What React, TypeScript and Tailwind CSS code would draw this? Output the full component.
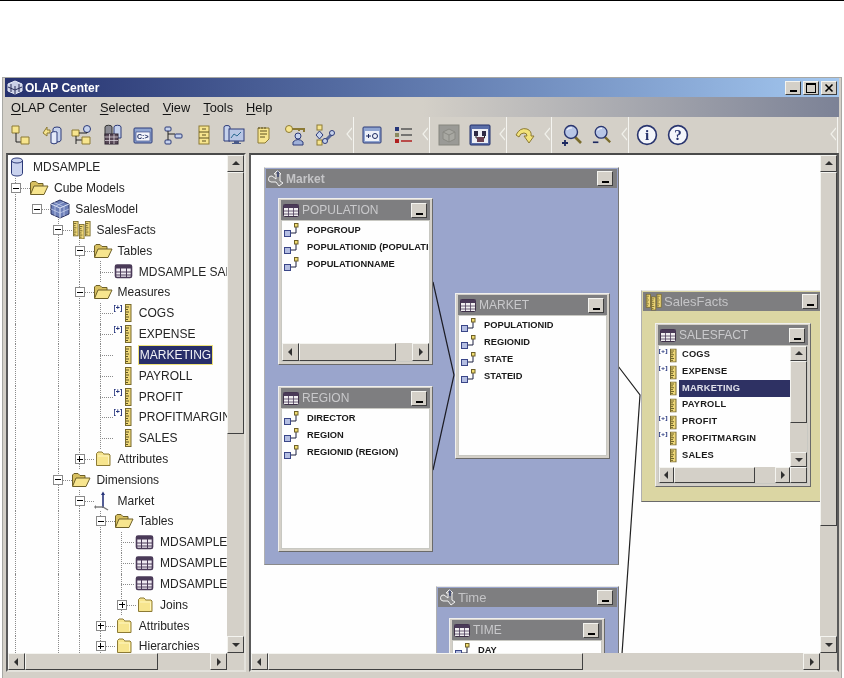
import type { ReactNode } from "react";

type Dir = "up" | "down" | "left" | "right";

const raised = "border border-t-[#f4f4f0] border-l-[#f4f4f0] border-r-[#404040] border-b-[#404040] bg-[#d4d0c8]";

function Arrow({ dir }: { dir: Dir }) {
    const pts = {
        up: "1,6 5,2 9,6",
        down: "1,3 9,3 5,7",
        left: "6,1 6,9 2,5",
        right: "3,1 3,9 7,5",
    }[dir];
    return (
        <svg width="10" height="10" viewBox="0 0 10 10">
            <polygon points={pts} fill="#303030" />
        </svg>
    );
}

function ArrowBtn({ dir, className }: { dir: Dir; className: string }) {
    return (
        <div className={`${raised} flex shrink-0 items-center justify-center ${className}`}>
            <Arrow dir={dir} />
        </div>
    );
}

function VScroll({ thumb, small }: { thumb: string; small?: boolean }) {
    const btn = small ? "h-[15px]" : "h-[17px]";
    return (
        <div className="flex h-full flex-col bg-[#d4d0c8]">
            <ArrowBtn dir="up" className={btn} />
            <div className={`${raised} shrink-0 ${thumb}`} />
            <div className="flex-1" />
            <ArrowBtn dir="down" className={btn} />
        </div>
    );
}

function HScroll({ thumb, small }: { thumb: string; small?: boolean }) {
    const btn = small ? "w-[15px]" : "w-[17px]";
    return (
        <div className="flex h-full w-full bg-[#d4d0c8]">
            <ArrowBtn dir="left" className={btn} />
            <div className={`${raised} shrink-0 ${thumb}`} />
            <div className="flex-1" />
            <ArrowBtn dir="right" className={btn} />
        </div>
    );
}

/* ---------- small tree / diagram icons ---------- */

function FolderClosed() {
    return (
        <svg width="20" height="16" viewBox="0 0 20 16">
            <path d="M3.5 4 L3.5 2.5 L5 1 H9 L10.5 2.5 V3 H16 L17 4 V14.5 H3.5 Z" fill="#f7e58e" stroke="#8c7a35" />
            <path d="M5 5 H15.5 V13" fill="none" stroke="#fff6c0" />
        </svg>
    );
}

function FolderOpen() {
    return (
        <svg width="20" height="16" viewBox="0 0 20 16">
            <path d="M1.5 14 V3 L3 1.5 H7 L9 3.5 H14 V6" fill="#d8c060" stroke="#6e6028" />
            <path d="M1.5 14.5 L5 6 H19 L15 14.5 Z" fill="#f7e58e" stroke="#6e6028" />
        </svg>
    );
}

function TableIcon() {
    return (
        <svg width="20" height="15" viewBox="0 0 20 15">
            <rect x="1.5" y="1" width="16" height="12.5" rx="1.5" fill="#efeaf2" stroke="#4a3a58" strokeWidth="1.6" />
            <rect x="1.5" y="1" width="16" height="3.5" fill="#4a3a58" />
            <path d="M2 8 H17 M2 11 H17 M6.5 4 V13 M12.5 4 V13" stroke="#4a3a58" />
        </svg>
    );
}

function Ruler() {
    return (
        <g>
            <rect x="0.5" y="0.5" width="5.5" height="17" fill="#efd878" stroke="#77692c" />
            <path d="M1 3 H4 M1 5.5 H3 M1 8 H4 M1 10.5 H3 M1 13 H4 M1 15.5 H3" stroke="#5f5524" />
        </g>
    );
}

function MeasureIcon({ plus, height = 20 }: { plus?: boolean; height?: number }) {
    return (
        <svg width="20" height={height} viewBox="0 0 20 20" preserveAspectRatio="none">
            {plus && (
                <text x="-0.5" y="6.5" fontSize="7" fontWeight="700" fill="#20307a" fontFamily="Liberation Sans">
                    [+]
                </text>
            )}
            <g transform="translate(11 1)">
                <Ruler />
            </g>
        </svg>
    );
}

function FactsIcon({ size = 20 }: { size?: number }) {
    return (
        <svg width={size} height="18" viewBox="0 0 20 18">
            <g transform="translate(2 0) scale(0.85 0.85)">
                <Ruler />
            </g>
            <g transform="translate(8 3) scale(0.85 0.85)">
                <Ruler />
            </g>
            <g transform="translate(14 0) scale(0.85 0.85)">
                <Ruler />
            </g>
        </svg>
    );
}

function CubeIcon() {
    return (
        <svg width="20" height="20" viewBox="0 0 20 20">
            <path d="M10 1 L19 5 V15 L10 19 L1 15 V5 Z" fill="#6d7fb8" stroke="#2a3260" />
            <path d="M1 5 L10 9 L19 5 M10 9 V19" stroke="#dfe6f6" fill="none" />
            <path d="M4 3.5 L13 7.5 M14 3 L6 7 M5 7 V17 M14 7 V17 M1 10 L10 14 L19 10" stroke="#cfd8f0" strokeWidth="0.7" fill="none" />
        </svg>
    );
}

function AxesIcon() {
    return (
        <svg width="20" height="20" viewBox="0 0 20 20">
            <path d="M10 17 V2" stroke="#27347a" strokeWidth="1.6" />
            <path d="M8 4 L10 0.5 L12 4 Z" fill="#27347a" />
            <path d="M10 16 H2" stroke="#777" strokeWidth="1.4" />
            <path d="M3 14 L1 16 L3 18" fill="#777" />
            <path d="M10 16 L15 19" stroke="#777" strokeWidth="1.4" />
        </svg>
    );
}

function ColumnIcon() {
    return (
        <svg width="15" height="15" viewBox="0 0 15 15" className="shrink-0">
            <rect x="0.5" y="7.5" width="6" height="6" fill="#b4bee2" stroke="#3a4688" />
            <path d="M7 10 H12 V4" fill="none" stroke="#1c2040" />
            <rect x="10.5" y="0.5" width="3.5" height="3.5" fill="#f0dc70" stroke="#6e6028" />
        </svg>
    );
}

function SmallTable() {
    return (
        <svg width="16" height="13" viewBox="0 0 16 13" className="shrink-0">
            <rect x="0.5" y="0.5" width="15" height="12" rx="1" fill="#f0eef0" stroke="#3e3048" />
            <rect x="0.5" y="0.5" width="15" height="3.5" fill="#4a3a58" />
            <path d="M1 7 H15 M1 10 H15 M5.5 4 V12 M10.5 4 V12" stroke="#4a3a58" strokeWidth="0.8" />
        </svg>
    );
}

function GroupIcon() {
    return (
        <svg width="18" height="17" viewBox="0 0 18 17" className="shrink-0">
            <path d="M10 1 L7 4 H9 V9 L5 6 A3 3 0 1 0 4 12 H9 L12 16 L16 13 L13 11 V4 H14 L11 1 Z" fill="#8b8b8c" stroke="#f2f2f2" />
            <path d="M11 1.5 V7" stroke="#20306c" strokeWidth="1.2" />
        </svg>
    );
}

function MinBtn() {
    return (
        <div className={`${raised} flex h-[15px] w-[16px] shrink-0 items-end justify-center pb-[2px]`}>
            <div className="h-[2px] w-[7px] bg-black" />
        </div>
    );
}

/* ---------- toolbar icons ---------- */

function ToolIcon({ children }: { children: ReactNode }) {
    return (
        <svg width="22" height="22" viewBox="0 0 22 22">
            {children}
        </svg>
    );
}

const yellow = "#f7e58e";
const yEdge = "#8c7a35";
const bluePale = "#c6d2ec";
const blueEdge = "#2c3a78";

const toolIcons: ReactNode[] = [
    <ToolIcon key="a">
        <path d="M2 2 H9 V9 H2 Z" fill={yellow} stroke={yEdge} />
        <path d="M6 9 V18 H11" fill="none" stroke="#222" />
        <path d="M11 13 H19 V20 H11 Z" fill={yellow} stroke={yEdge} />
    </ToolIcon>,
    <ToolIcon key="b">
        <path d="M12 5 a4 2 0 0 1 8 0 V16 a4 2 0 0 1 -8 0 Z" fill={bluePale} stroke={blueEdge} />
        <path d="M10 9 a4 2 0 0 1 6 -1 V19 a4 2 0 0 1 -6 0 Z" fill="#e4eaf8" stroke={blueEdge} />
        <path d="M2 9 L6 3 V6 H9 V9 H6 V12 Z" fill={yellow} stroke={yEdge} />
    </ToolIcon>,
    <ToolIcon key="c">
        <path d="M1 6 H8 V12 H1 Z" fill={yellow} stroke={yEdge} />
        <circle cx="16" cy="5" r="3.5" fill={bluePale} stroke={blueEdge} />
        <path d="M5 12 V20 M5 16 H11 M8 9 H16 V8" fill="none" stroke="#222" />
        <path d="M11 13 H19 V20 H11 Z" fill={yellow} stroke={yEdge} />
    </ToolIcon>,
    <ToolIcon key="d">
        <path d="M4 3 a3 1.5 0 0 1 7 0 V12 H4 Z" fill="#8a8a92" stroke="#333" />
        <path d="M13 3 a3 1.5 0 0 1 7 0 V14 H13 Z" fill={bluePale} stroke={blueEdge} />
        <rect x="4" y="10" width="13" height="10" fill="#5a4a58" stroke="#2e2432" />
        <path d="M4 13 H17 M4 16.5 H17 M8.5 10 V20 M13 10 V20" stroke="#d8d0d8" strokeWidth="0.8" />
    </ToolIcon>,
    <ToolIcon key="e">
        <rect x="2" y="4" width="18" height="15" rx="1" fill="#8fa4d0" stroke={blueEdge} />
        <rect x="4" y="8" width="14" height="9" fill="#f4f6fb" stroke={blueEdge} strokeWidth="0.6" />
        <text x="5" y="15" fontSize="7" fontWeight="700" fill="#1c2a60" fontFamily="Liberation Sans">
            C:&gt;
        </text>
    </ToolIcon>,
    <ToolIcon key="f">
        <rect x="3" y="3" width="6" height="4" rx="1" fill={bluePale} stroke={blueEdge} />
        <rect x="13" y="10" width="7" height="4" rx="1" fill={bluePale} stroke={blueEdge} />
        <rect x="3" y="16" width="6" height="4" rx="1" fill={bluePale} stroke={blueEdge} />
        <path d="M6 7 V10 H13 M6 10 V16" fill="none" stroke="#222" />
    </ToolIcon>,
    <ToolIcon key="g">
        <rect x="6" y="2" width="10" height="18" fill={yellow} stroke={yEdge} />
        <path d="M6 8 H16 M6 14 H16 M9 5 H13 M9 11 H13 M9 17 H13" stroke="#5c5020" />
    </ToolIcon>,
    <ToolIcon key="h">
        <path d="M1 3 a3 1.5 0 0 1 6 0 V17 H1 Z" fill={bluePale} stroke={blueEdge} />
        <rect x="6" y="5" width="15" height="12" fill="#b8c6e4" stroke={blueEdge} />
        <path d="M8 14 L11 10 L14 12 L18 8" fill="none" stroke="#2c6a90" />
        <path d="M11 17 H16 V19 H18 V20 H9 V19 H11 Z" fill="#4a5a88" />
    </ToolIcon>,
    <ToolIcon key="i">
        <path d="M5 4 H16 V15 L12 19 H5 Z" fill={yellow} stroke={yEdge} />
        <path d="M7 7 H14 M7 10 H14 M7 13 H12 M6 3 V5 M9 3 V5 M12 3 V5" stroke="#5c5020" />
    </ToolIcon>,
    <ToolIcon key="j">
        <circle cx="5" cy="5" r="3.5" fill={yellow} stroke={yEdge} />
        <path d="M8 5 H20 V8 M15 5 V7" fill="none" stroke={yEdge} strokeWidth="2" />
        <circle cx="14" cy="12" r="3" fill={bluePale} stroke={blueEdge} />
        <path d="M9 21 V18 Q14 13 19 18 V21 Z" fill="#9fb0d8" stroke={blueEdge} />
    </ToolIcon>,
    <ToolIcon key="k">
        <rect x="3" y="1" width="5" height="5" fill={yellow} stroke={yEdge} />
        <path d="M5.5 7 L9 11 L5.5 15 L2 11 Z" fill={bluePale} stroke={blueEdge} />
        <rect x="3" y="16" width="5" height="5" fill={yellow} stroke={yEdge} />
        <path d="M11 17 L18 10" stroke="#5a6a9a" strokeWidth="3" />
        <circle cx="18" cy="9" r="2.5" fill={bluePale} stroke={blueEdge} />
        <circle cx="11" cy="17" r="2.5" fill={bluePale} stroke={blueEdge} />
    </ToolIcon>,
];

const toolIcons2: ReactNode[] = [
    <ToolIcon key="l">
        <rect x="2" y="3" width="18" height="16" rx="1" fill="#8fa4d0" stroke={blueEdge} />
        <rect x="4" y="7" width="14" height="10" fill="#eef1f8" />
        <circle cx="14" cy="12" r="2.5" fill="none" stroke="#1c2a60" />
        <path d="M5 12 H10 M7.5 10 V14" stroke="#1c2a60" />
    </ToolIcon>,
    <ToolIcon key="m">
        <rect x="3" y="3" width="4" height="4" fill="#25357a" />
        <rect x="3" y="9" width="4" height="4" fill="#8a8a60" />
        <rect x="3" y="15" width="4" height="4" fill="#b02020" />
        <path d="M9 5 H20 M9 11 H20" stroke="#555" strokeWidth="1.5" />
        <path d="M9 17 H20" stroke="#b02020" strokeWidth="1.5" />
    </ToolIcon>,
];

const toolIcons3: ReactNode[] = [
    <ToolIcon key="n">
        <rect x="1" y="1" width="20" height="20" fill="#9a9a96" stroke="#86867f" />
        <path d="M11 5 L17 8 V15 L11 18 L5 15 V8 Z" fill="#a8a8a2" stroke="#8a8a84" />
        <path d="M5 8 L11 11 L17 8 M11 11 V18" fill="none" stroke="#8a8a84" />
    </ToolIcon>,
    <ToolIcon key="o">
        <rect x="1" y="1" width="20" height="20" rx="1" fill="#5a6ea8" stroke="#23306a" />
        <rect x="3" y="5" width="16" height="14" fill="#eef0f6" />
        <rect x="5" y="7" width="4" height="5" fill="#2e2a44" />
        <rect x="13" y="7" width="4" height="5" fill="#2e2a44" />
        <rect x="8" y="13" width="7" height="5" fill="#6a4050" />
        <path d="M7 12 V14 H8 M15 14 H15.5 V12" stroke="#222" fill="none" />
    </ToolIcon>,
];

function ZoomIcon({ plus }: { plus?: boolean }) {
    return (
        <ToolIcon>
            <path d="M14 13 L20 19" stroke="#7a6c2c" strokeWidth="2.6" />
            <circle cx="10" cy="8" r="6.5" fill="#b8c6e6" stroke="#28346e" strokeWidth="1.4" />
            <path d="M6 6 Q8 3.5 11 4" stroke="#eef2fa" fill="none" strokeWidth="1.2" />
            {plus ? <path d="M1 19 H7 M4 16 V22" stroke="#1c2860" strokeWidth="1.8" /> : <path d="M1 19 H7" stroke="#1c2860" strokeWidth="1.8" />}
        </ToolIcon>
    );
}

function CircleGlyph({ glyph }: { glyph: string }) {
    return (
        <ToolIcon>
            <circle cx="11" cy="11" r="9.4" fill="#f4f6fb" stroke="#28346e" strokeWidth="1.6" />
            <text x="11" y="16" textAnchor="middle" fontSize="15" fontWeight="700" fill="#28346e" fontFamily="Liberation Serif">
                {glyph}
            </text>
        </ToolIcon>
    );
}

function ToolSep({ className }: { className: string }) {
    return (
        <div className={`relative h-full w-px shrink-0 bg-[#f4f4f0] ${className}`}>
            <svg width="6" height="14" viewBox="0 0 6 14" className="absolute top-[10px] left-[-7px]">
                <path d="M6 1 L1 7 L6 13" fill="none" stroke="#f0f0ea" strokeWidth="1.2" />
            </svg>
        </div>
    );
}

function ToolSlot({ children, className }: { children: ReactNode; className: string }) {
    return <div className={`flex shrink-0 items-center justify-center ${className}`}>{children}</div>;
}

function Toolbar() {
    return (
        <div className="flex h-[36px] items-center bg-[#d4d0c8] pl-px">
            {toolIcons.map((icon, idx) => (
                <ToolSlot key={idx} className="w-[30.4px]">
                    {icon}
                </ToolSlot>
            ))}
            <ToolSep className="mr-[2.5px] ml-[13px]" />
            {toolIcons2.map((icon, idx) => (
                <ToolSlot key={idx} className="w-[31px]">
                    {icon}
                </ToolSlot>
            ))}
            <ToolSep className="mr-[3.5px] ml-[10.5px]" />
            {toolIcons3.map((icon, idx) => (
                <ToolSlot key={idx} className="w-[31px]">
                    {icon}
                </ToolSlot>
            ))}
            <ToolSep className="ml-[10.5px]" />
            <ToolSlot className="w-[36px]">
                <ToolIcon>
                    <path d="M2 11 Q6 3 13 5 Q18 7 17 12 H20 L15 19 L10 12 H13 Q13 9 10 9 Q6 9 5 13 Z" fill="#f2e27a" stroke="#8c7a35" />
                </ToolIcon>
            </ToolSlot>
            <ToolSep className="ml-[8px]" />
            <ToolSlot className="w-[40px]">
                <ZoomIcon plus />
            </ToolSlot>
            <ToolSlot className="w-[20px]">
                <ZoomIcon />
            </ToolSlot>
            <ToolSep className="ml-[16px]" />
            <ToolSlot className="w-[36px]">
                <CircleGlyph glyph="i" />
            </ToolSlot>
            <ToolSlot className="w-[26px]">
                <CircleGlyph glyph="?" />
            </ToolSlot>
            <div className="flex-1" />
            <ToolSep className="mr-px" />
        </div>
    );
}

/* ---------- tree ---------- */

type TreeIcon = "open" | "closed" | "table" | "cube" | "facts" | "axes" | "measure" | "measurePlus";

interface ITreeRow {
    label: string;
    level: number;
    exp?: "-" | "+";
    icon: TreeIcon;
    selected?: boolean;
}

const treeRows: ITreeRow[] = [
    { label: "Cube Models", level: 0, exp: "-", icon: "open" },
    { label: "SalesModel", level: 1, exp: "-", icon: "cube" },
    { label: "SalesFacts", level: 2, exp: "-", icon: "facts" },
    { label: "Tables", level: 3, exp: "-", icon: "open" },
    { label: "MDSAMPLE SALESFACT", level: 4, icon: "table" },
    { label: "Measures", level: 3, exp: "-", icon: "open" },
    { label: "COGS", level: 4, icon: "measurePlus" },
    { label: "EXPENSE", level: 4, icon: "measurePlus" },
    { label: "MARKETING", level: 4, icon: "measure", selected: true },
    { label: "PAYROLL", level: 4, icon: "measure" },
    { label: "PROFIT", level: 4, icon: "measurePlus" },
    { label: "PROFITMARGIN", level: 4, icon: "measurePlus" },
    { label: "SALES", level: 4, icon: "measure" },
    { label: "Attributes", level: 3, exp: "+", icon: "closed" },
    { label: "Dimensions", level: 2, exp: "-", icon: "open" },
    { label: "Market", level: 3, exp: "-", icon: "axes" },
    { label: "Tables", level: 4, exp: "-", icon: "open" },
    { label: "MDSAMPLE.MARKET", level: 5, icon: "table" },
    { label: "MDSAMPLE.POPULATION", level: 5, icon: "table" },
    { label: "MDSAMPLE.REGION", level: 5, icon: "table" },
    { label: "Joins", level: 5, exp: "+", icon: "closed" },
    { label: "Attributes", level: 4, exp: "+", icon: "closed" },
    { label: "Hierarchies", level: 4, exp: "+", icon: "closed" },
];

const guideX = [15, 58, 79, 100, 121];

function renderTreeIcon(icon: TreeIcon) {
    switch (icon) {
        case "open":
            return <FolderOpen />;
        case "closed":
            return <FolderClosed />;
        case "table":
            return <TableIcon />;
        case "cube":
            return <CubeIcon />;
        case "facts":
            return <FactsIcon />;
        case "axes":
            return <AxesIcon />;
        case "measure":
            return <MeasureIcon />;
        case "measurePlus":
            return <MeasureIcon plus />;
    }
}

function TreeRow({ row }: { row: ITreeRow }) {
    const guides = row.level < 2 ? guideX.slice(0, 1) : guideX.slice(0, row.level);
    const left = 3 + 21.2 * row.level;
    return (
        <div className="relative flex h-[20.83px] items-center" style={{ paddingLeft: left }}>
            {guides.map((x) => (
                <span key={x} className="absolute top-0 h-full border-l border-dotted border-[#8a8a8a]" style={{ left: x - 8 }} />
            ))}
            <span
                className={`absolute top-1/2 border-t border-dotted border-[#8a8a8a] ${row.exp ? "w-[9px]" : "w-[13px]"}`}
                style={{ left: left + (row.exp ? 10 : 4) }}
            />
            <span className="relative flex h-[10px] w-[10px] shrink-0 items-center justify-center">
                {row.exp && (
                    <span className="relative flex h-[10px] w-[10px] items-center justify-center border border-[#8a8a8a] bg-white">
                        <span className="h-px w-[6px] bg-black" />
                        {row.exp === "+" && <span className="absolute h-[6px] w-px bg-black" />}
                    </span>
                )}
            </span>
            <span className="relative ml-[8px] flex w-[20px] shrink-0 items-center justify-center">{renderTreeIcon(row.icon)}</span>
            <span
                className={
                    row.selected
                        ? "relative ml-[4px] border border-[#efe27a] bg-[#282e6a] px-px leading-[18px] text-[#f2f2f6]"
                        : "relative ml-[5px] text-[#242424]"
                }
            >
                {row.label}
            </span>
        </div>
    );
}

function Tree() {
    return (
        <div className="h-full overflow-hidden whitespace-nowrap bg-[#fefefe] pt-[2px] text-[12px]">
            <div className="flex h-[20.83px] items-center pl-[2px]">
                <svg width="14" height="20" viewBox="0 0 14 20">
                    <path d="M1.5 3.5 a5.5 2.5 0 0 1 11 0 V16.5 a5.5 2.5 0 0 1 -11 0 Z" fill="#c9d2ee" stroke="#2c3a78" />
                    <path d="M1.5 3.5 a5.5 2.5 0 0 0 11 0" fill="none" stroke="#2c3a78" />
                </svg>
                <span className="ml-[9px] text-[#242424]">MDSAMPLE</span>
            </div>
            {treeRows.map((row, idx) => (
                <TreeRow key={idx} row={row} />
            ))}
        </div>
    );
}

/* ---------- diagram ---------- */

function NodeTitle({ icon, title }: { icon: ReactNode; title: string }) {
    return (
        <div className="flex h-[20px] shrink-0 items-center bg-[#7e7e80] pr-[3px] pl-[2px] text-[12px] text-[#c9c9cb]">
            {icon}
            <span className="ml-[3px] flex-1 overflow-hidden whitespace-nowrap">{title}</span>
            <MinBtn />
        </div>
    );
}

function TableNode({ title, className, children }: { title: string; className: string; children: ReactNode }) {
    return (
        <div className={`absolute flex flex-col border border-t-[#f0f0ee] border-r-[#6a6a6a] border-b-[#6a6a6a] border-l-[#f0f0ee] bg-[#d4d0c8] px-[2px] pt-px pb-[2px] ${className}`}>
            <NodeTitle icon={<SmallTable />} title={title} />
            {children}
        </div>
    );
}

function ColumnList({ names }: { names: string[] }) {
    return (
        <div className="overflow-hidden whitespace-nowrap pt-px text-[9.3px] font-bold text-[#1a1a1a]">
            {names.map((name) => (
                <div key={name} className="flex h-[17px] items-center pl-[2px]">
                    <ColumnIcon />
                    <span className="ml-[8px]">{name}</span>
                </div>
            ))}
        </div>
    );
}

function NodeBody({ children }: { children: ReactNode }) {
    return <div className="flex min-h-0 flex-1 flex-col overflow-hidden border border-[#c8c8c2] bg-[#fefefe]">{children}</div>;
}

function GroupTitle({ icon, title, titleClass }: { icon: ReactNode; title: string; titleClass: string }) {
    return (
        <div className="flex h-[19px] shrink-0 items-center bg-[#7e7e80] pr-[4px] pl-px text-[#c4c4c6]">
            {icon}
            <span className={`ml-px flex-1 ${titleClass}`}>{title}</span>
            <MinBtn />
        </div>
    );
}

const salesMeasures = [
    { name: "COGS", plus: true },
    { name: "EXPENSE", plus: true },
    { name: "MARKETING", plus: false, selected: true },
    { name: "PAYROLL", plus: false },
    { name: "PROFIT", plus: true },
    { name: "PROFITMARGIN", plus: true },
    { name: "SALES", plus: false },
];

function Diagram() {
    return (
        <div className="relative h-full w-full overflow-hidden bg-[#fefefe]">
            <svg width="570" height="499" viewBox="0 0 570 499" className="absolute inset-0">
                <polyline points="367,211 389,240 371,499" fill="none" stroke="#222" strokeWidth="1.2" />
            </svg>

            <div className="absolute top-[12px] left-[13px] flex h-[398px] w-[355px] flex-col border border-t-[#e8e8e6] border-r-[#777] border-b-[#8a8a8a] border-l-[#b0b0b0] bg-[#9aa5cc] p-px">
                <GroupTitle icon={<GroupIcon />} title="Market" titleClass="text-[12px] font-bold" />
            </div>
            <svg width="570" height="499" viewBox="0 0 570 499" className="absolute inset-0">
                <polyline points="182,127 203,220 182,315" fill="none" stroke="#1c1c24" strokeWidth="1.2" />
            </svg>
            <TableNode title="POPULATION" className="top-[43px] left-[27px] h-[167px] w-[155px]">
                <NodeBody>
                    <ColumnList names={["POPGROUP", "POPULATIONID (POPULATION)", "POPULATIONNAME"]} />
                    <div className="flex-1" />
                    <div className="h-[18px] shrink-0">
                        <HScroll thumb="w-[97px]" />
                    </div>
                </NodeBody>
            </TableNode>
            <TableNode title="REGION" className="top-[231px] left-[27px] h-[166px] w-[155px]">
                <NodeBody>
                    <ColumnList names={["DIRECTOR", "REGION", "REGIONID (REGION)"]} />
                </NodeBody>
            </TableNode>
            <TableNode title="MARKET" className="top-[138px] left-[204px] h-[166px] w-[155px]">
                <NodeBody>
                    <ColumnList names={["POPULATIONID", "REGIONID", "STATE", "STATEID"]} />
                </NodeBody>
            </TableNode>

            <div className="absolute top-[431px] left-[185px] flex h-[120px] w-[183px] flex-col border border-t-[#e8e8e6] border-r-[#777] border-l-[#b0b0b0] bg-[#9aa5cc] p-px">
                <GroupTitle icon={<GroupIcon />} title="Time" titleClass="text-[13px]" />
            </div>
            <TableNode title="TIME" className="top-[463px] left-[198px] h-[100px] w-[156px]">
                <NodeBody>
                    <ColumnList names={["DAY"]} />
                </NodeBody>
            </TableNode>

            <div className="absolute top-[135px] left-[390px] flex h-[212px] w-[190px] flex-col border border-t-[#e8e8e6] border-b-[#6a6a6a] border-l-[#b0b0b0] bg-[#dbd6a3] p-px">
                <div className="flex h-[19px] w-[178px] shrink-0 items-center bg-[#7e7e80] pr-[3px] pl-px text-[13px] text-[#c4c4c6]">
                    <FactsIcon size={18} />
                    <span className="ml-[2px] flex-1">SalesFacts</span>
                    <MinBtn />
                </div>
            </div>
            <TableNode title="SALESFACT" className="top-[168px] left-[404px] h-[164px] w-[156px]">
                <NodeBody>
                    <div className="flex min-h-0 flex-1">
                        <div className="flex-1 overflow-hidden whitespace-nowrap pt-px text-[9.3px] font-bold tracking-[0.2px] text-[#1a1a1a]">
                            {salesMeasures.map((m) => (
                                <div key={m.name} className="flex h-[16.7px] items-center">
                                    <span className="flex h-full w-[20px] shrink-0 items-center">
                                        <MeasureIcon plus={m.plus} height={15} />
                                    </span>
                                    <span
                                        className={
                                            m.selected
                                                ? "flex h-[17px] flex-1 items-center bg-[#2e3163] pl-[3px] text-[#dfe0ea]"
                                                : "pl-[3px]"
                                        }
                                    >
                                        {m.name}
                                    </span>
                                </div>
                            ))}
                        </div>
                        <div className="w-[17px] shrink-0">
                            <VScroll thumb="h-[62px]" small />
                        </div>
                    </div>
                    <div className="flex h-[16px] shrink-0 bg-[#d4d0c8]">
                        <div className="flex-1">
                            <HScroll thumb="w-[81px]" small />
                        </div>
                        <div className={`${raised} w-[17px] shrink-0`} />
                    </div>
                </NodeBody>
            </TableNode>
        </div>
    );
}

/* ---------- window ---------- */

const menus = [
    { hot: "O", rest: "LAP Center" },
    { hot: "S", rest: "elected" },
    { hot: "V", rest: "iew" },
    { hot: "T", rest: "ools" },
    { hot: "H", rest: "elp" },
];

function WinBtn({ children }: { children: ReactNode }) {
    return <div className={`${raised} flex h-[14px] w-[16px] items-center justify-center`}>{children}</div>;
}

export default function App() {
    return (
        <div className="h-[678px] w-[844px] overflow-hidden bg-white font-['Liberation_Sans',Arial,sans-serif] blur-[0.3px]">
            <div className="h-px w-full bg-black" />
            <div className="mt-[76px] ml-[2px] flex h-[601px] w-[840px] flex-col border-t border-r border-l border-[#a8a8a4] bg-[#d4d0c8] px-[2px]">
                <div className="flex h-[19px] shrink-0 items-center bg-gradient-to-r from-[#26316e] to-[#a4c8f0] px-[2px]">
                    <svg width="16" height="15" viewBox="0 0 16 15">
                        <path d="M8 1 L15 4 V11 L8 14 L1 11 V4 Z" fill="#c9cfe6" stroke="#e8ecf8" />
                        <path d="M4 4 V12 M8 6 V14 M12 4 V12 M1 7 L8 10 L15 7" stroke="#2a2f58" fill="none" />
                    </svg>
                    <span className="ml-[2px] flex-1 text-[12px] font-bold text-white">OLAP Center</span>
                    <div className="flex gap-[2px]">
                        <WinBtn>
                            <div className="mt-[7px] h-[2px] w-[7px] bg-black" />
                        </WinBtn>
                        <WinBtn>
                            <div className="h-[10px] w-[10px] border border-t-2 border-black" />
                        </WinBtn>
                        <WinBtn>
                            <svg width="10" height="10" viewBox="0 0 10 10">
                                <path d="M1.5 1.5 L8.5 8.5 M8.5 1.5 L1.5 8.5" stroke="#000" strokeWidth="1.6" />
                            </svg>
                        </WinBtn>
                    </div>
                </div>
                <div className="flex h-[20px] shrink-0 items-center gap-[13px] bg-gradient-to-r from-[#d4d0c8] from-50% to-[#7c8296] pt-px pl-[6px] text-[12.8px] text-[#141414]">
                    {menus.map((m) => (
                        <span key={m.hot}>
                            <span className="underline underline-offset-2">{m.hot}</span>
                            {m.rest}
                        </span>
                    ))}
                </div>
                <Toolbar />
                <div className="flex min-h-0 flex-1 pb-[6px]">
                    <div className="ml-px flex h-full w-[240px] shrink-0 flex-col border-2 border-t-[#4a4a4a] border-r-[#e4e2dc] border-b-[#e4e2dc] border-l-[#5a5a5a]">
                        <div className="flex min-h-0 flex-1">
                            <div className="min-w-0 flex-1">
                                <Tree />
                            </div>
                            <div className="w-[17px] shrink-0">
                                <VScroll thumb="h-[262px]" />
                            </div>
                        </div>
                        <div className="flex h-[17px] shrink-0">
                            <div className="flex-1">
                                <HScroll thumb="w-[133px]" />
                            </div>
                            <div className="w-[17px] shrink-0 bg-[#d4d0c8]" />
                        </div>
                    </div>
                    <div className="ml-[3px] flex h-full min-w-0 flex-1 flex-col border-2 border-t-[#4a4a4a] border-r-[#5a5a5a] border-b-[#e4e2dc] border-l-[#5a5a5a]">
                        <div className="flex min-h-0 flex-1">
                            <div className="min-w-0 flex-1">
                                <Diagram />
                            </div>
                            <div className="w-[17px] shrink-0">
                                <VScroll thumb="h-[354px]" />
                            </div>
                        </div>
                        <div className="flex h-[17px] shrink-0">
                            <div className="flex-1">
                                <HScroll thumb="w-[315px]" />
                            </div>
                            <div className="w-[17px] shrink-0 bg-[#d4d0c8]" />
                        </div>
                    </div>
                </div>
            </div>
        </div>
    );
}
